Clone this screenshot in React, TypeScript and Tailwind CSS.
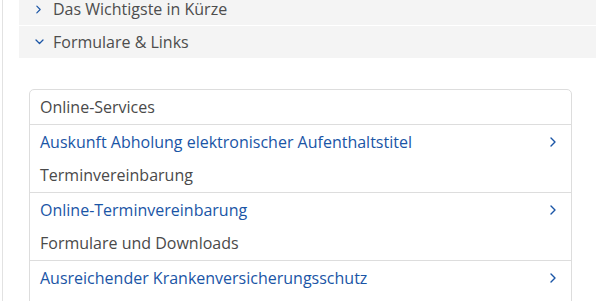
import React from "react";

const ChevronRight = ({ w = 6, h = 10 }: { w?: number; h?: number }) => (
  <svg width={w} height={h} viewBox="0 0 6 10" fill="none">
    <path d="M1 1l4 4-4 4" stroke="#1a55a6" strokeWidth="1.4" strokeLinecap="round" strokeLinejoin="round" />
  </svg>
);

const ChevronDown = () => (
  <svg width="9" height="6" viewBox="0 0 9 6" fill="none">
    <path d="M1 1l3.5 3.5L8 1" stroke="#1a55a6" strokeWidth="1.3" strokeLinecap="round" strokeLinejoin="round" />
  </svg>
);

const Header = ({ text }: { text: string }) => (
  <div className="h-[34px] flex items-center pl-[10px] text-[16px] text-[#4a4a4a]">
    {text}
  </div>
);

const LinkRow = ({ text }: { text: string }) => (
  <div className="h-[34px] flex items-center justify-between pl-[10px] pr-[15px] border-t border-[#dddddd] text-[16px] text-[#1a55a6]">
    <span>{text}</span>
    <ChevronRight />
  </div>
);

export default function App() {
  return (
    <div
      className="w-[596px] h-[301px] overflow-hidden bg-white"
      style={{ fontFamily: '"Open Sans", sans-serif' }}
    >
      <div className="ml-[2px] border-l border-[#e2e2e2] min-h-[301px] pl-[16px]">
        <div className="-mt-[7px] h-[32px] bg-[#f4f4f4] flex items-center pl-[17px] text-[16px] text-[#4d4d4d] w-[600px]">
          <span className="w-[17px] flex items-center">
            <ChevronRight w={5} h={9} />
          </span>
          <span>Das Wichtigste in Kürze</span>
        </div>
        <div className="mt-[1px] h-[32px] bg-[#f4f4f4] flex items-center pl-[16px] text-[16px] text-[#4d4d4d] w-[600px]">
          <span className="w-[18px] flex items-center">
            <ChevronDown />
          </span>
          <span>Formulare &amp; Links</span>
        </div>
        <div className="mt-[31px] ml-[10px] w-[543px] border border-[#dddddd] rounded-[5px]">
          <Header text="Online-Services" />
          <LinkRow text="Auskunft Abholung elektronischer Aufenthaltstitel" />
          <Header text="Terminvereinbarung" />
          <LinkRow text="Online-Terminvereinbarung" />
          <Header text="Formulare und Downloads" />
          <LinkRow text="Ausreichender Krankenversicherungsschutz" />
          <div className="h-[34px]" />
        </div>
      </div>
    </div>
  );
}
